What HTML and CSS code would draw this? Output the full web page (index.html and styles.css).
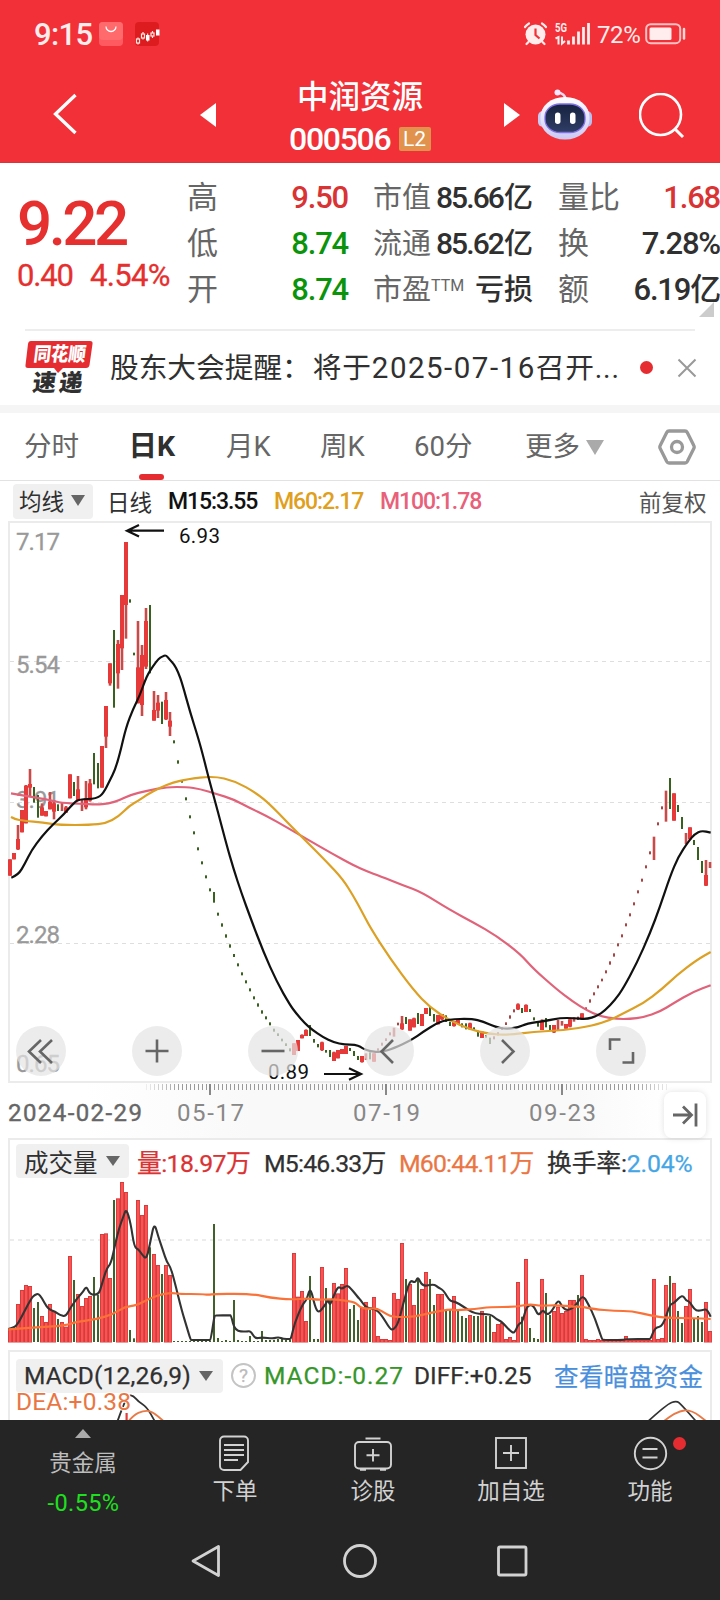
FILE: index.html
```html
<!DOCTYPE html>
<html lang="zh-CN">
<head>
<meta charset="utf-8">
<title>中润资源 000506</title>
<link rel="stylesheet" href="styles.css">
</head>
<body>
<div class="app">
  <header class="top">
    <div class="status">
      <span class="clock">9:15</span>
      <svg class="bag" width="24" height="24" viewBox="0 0 24 24"><rect width="24" height="24" rx="4" fill="#ff5a60"/><rect width="24" height="18" rx="4" fill="#ff6a6c"/><path d="M7 4.500a5 5 0 0 0 10 0" fill="none" stroke="#fff" stroke-width="1.300"/></svg>
      <svg class="kapp" width="25" height="24" viewBox="0 0 25 24"><rect width="24" height="24" rx="4" fill="#dd1c20"/><g fill="none" stroke="#ffe8e0" stroke-width="1.200"><rect x="1.500" y="17" width="3" height="4"/><path d="M3 15.500v1.500M3 21v1.500M8 10v2m0 4v1.500"/><rect x="6.500" y="12" width="3" height="4"/><path d="M17.500 9v2m0 3v2"/><rect x="16" y="11" width="3" height="3"/></g><path d="M11 13h3.500v5.500H11zM21 7.500h3.500v6H21z" fill="#fff"/><path d="M12.700 11.500v8" stroke="#fff"/></svg>
      <span class="grow"></span>
      <svg class="alarm" width="25" height="24" viewBox="0 0 25 24"><circle cx="12.500" cy="12.500" r="10" fill="#ffecec"/><path d="M2 5a13 13 0 0 1 4-3.500M23 5a13 13 0 0 0-4-3.500M5.500 20l-2 2M19.500 20l2 2" stroke="#ffecec" stroke-width="2.200" fill="none" stroke-linecap="round"/><path d="M12.500 6.500v6.500l4 3.500" stroke="#f23038" stroke-width="2.200" fill="none"/></svg>
      <svg class="signal" width="37" height="30" viewBox="-1 -3 37 30"><text x="0" y="10" font-size="12.500" font-weight="700" textLength="12" lengthAdjust="spacingAndGlyphs" fill="#ffecec">5G</text><path d="M.5 16.500l3-1.500v7.500M7 14.500v7l3-2.500" stroke="#ffecec" stroke-width="2" fill="none"/><path d="M13.500 18.500v4M18.500 14.500v8M23.500 9.500v13M28.500 5v17.500M33.500 1v21.500" stroke="#ffecec" stroke-width="2.800"/></svg>
      <span class="pct">72%</span>
      <svg class="battery" width="41" height="22" viewBox="0 0 41 22"><rect x="1.200" y="1.200" width="34" height="19" rx="4.500" fill="none" stroke="#ffc2c4" stroke-width="2"/><rect x="4.500" y="4.500" width="22" height="12.500" rx="1.500" fill="#ffecec"/><path d="M39 6v9.500" stroke="#ffd5d6" stroke-width="2.500" stroke-linecap="round"/></svg>
    </div>
    <div class="titlebar">
      <svg class="back" width="26" height="44" viewBox="0 0 26 44"><path d="M22.500 3L2.500 22l20 19" fill="none" stroke="#fff" stroke-width="3.300"/></svg>
      <svg class="prev" width="16" height="24"><path d="M0 12L16 0V24z" fill="#fff"/></svg>
      <div class="name"><b>中润资源</b><div class="code"><span>000506</span><i>L2</i></div></div>
      <svg class="next" width="16" height="24"><path d="M16 12L0 0V24z" fill="#fff"/></svg>
      <svg class="robot" width="56" height="52" viewBox="0 0 56 52"><defs><linearGradient id="shell" x1="0" y1="0" x2="0" y2="1"><stop offset="0" stop-color="#fff"/><stop offset=".6" stop-color="#e2dffb"/><stop offset="1" stop-color="#c9c8f2"/></linearGradient><linearGradient id="face" x1="0" y1="0" x2="0" y2="1"><stop offset="0" stop-color="#17223f"/><stop offset="1" stop-color="#303d66"/></linearGradient></defs><path d="M29 11Q28 4 20 3.500" fill="none" stroke="#e8dcf5" stroke-width="2.500"/><circle cx="20.500" cy="3.500" r="3" fill="#f3e8ff"/><rect x="1" y="22" width="10" height="16" rx="5" fill="#c9caf4"/><rect x="45" y="22" width="10" height="16" rx="5" fill="#b9bdf0"/><rect x="3.500" y="8" width="49" height="42.500" rx="24" ry="20" fill="url(#shell)"/><rect x="8" y="15" width="40" height="28.500" rx="15" ry="13" fill="url(#face)" stroke="#8171e6" stroke-width="1.300"/><rect x="18" y="23.500" width="5.500" height="11.500" rx="2.700" fill="#fff"/><rect x="33" y="23.500" width="5.500" height="11.500" rx="2.700" fill="#fff"/></svg>
      <svg class="search" width="46" height="46" viewBox="0 0 46 46"><circle cx="21.500" cy="21.500" r="20.500" fill="none" stroke="#fff" stroke-width="2.600"/><path d="M36 36l8 8" stroke="#fff" stroke-width="3"/></svg>
    </div>
  </header>

  <section class="quote">
    <div class="price"><strong>9.22</strong><p><span>0.40</span><span>4.54%</span></p></div>
    <dl class="facts">
      <dt>高</dt><dd class="up">9.50</dd><dt class="mid">市值</dt><dd class="cap">85.66<em>亿</em></dd><dt class="last">量比</dt><dd class="up">1.68</dd>
      <dt>低</dt><dd class="down">8.74</dd><dt class="mid">流通</dt><dd class="cap">85.62<em>亿</em></dd><dt class="last">换</dt><dd>7.28%</dd>
      <dt>开</dt><dd class="down">8.74</dd><dt class="mid">市盈<sup>TTM</sup></dt><dd class="cap"><em>亏损</em></dd><dt class="last">额</dt><dd>6.19亿</dd>
    </dl>
    <svg class="corner" width="15" height="15"><path d="M15 0v15H0z" fill="#ccc"/></svg>
  </section>

  <section class="notice">
    <svg width="68" height="55" viewBox="0 0 68 55"><path d="M6 0h59q3 0 2.500 3l-3 21q-.5 3-3.500 3H38l-5 5-4-5H3q-3 0-2.500-3L3 3q.4-3 3-3z" fill="#e52d31"/><g transform="skewX(-7)" font-weight="900" font-size="19.500"><text x="10.500" y="20.500" fill="#fff" textLength="52" lengthAdjust="spacingAndGlyphs">同花顺</text><text x="13" y="50" fill="#303030" font-size="23.500" textLength="50">速递</text></g></svg>
    <span class="msg">股东大会提醒：<span class="date">将于<span>2025-07-16</span>召开...</span></span>
    <i class="dot"></i>
    <svg width="20" height="20"><path d="M1.500 1.500l17 17M18.500 1.500l-17 17" stroke="#999" stroke-width="2"/></svg>
  </section>

  <nav class="tabs">
    <span>分时</span><span class="on">日K</span><span>月K</span><span>周K</span><span>60分</span>
    <span class="more">更多<svg width="18" height="15"><path d="M0 0h18L9 15z" fill="#aaa"/></svg></span>
    <svg class="gear" width="38" height="36" viewBox="0 0 38 36"><path d="M11 2h16q1.500 0 2.300 1.500l6.500 13q.8 1.500 0 3l-6.500 13Q28.500 34 27 34H11q-1.500 0-2.300-1.500l-6.500-13q-.8-1.500 0-3l6.500-13Q9.500 2 11 2z" fill="none" stroke="#999" stroke-width="3.300"/><circle cx="19" cy="18" r="5.500" fill="none" stroke="#999" stroke-width="3.300"/></svg>
  </nav>

  <div class="legend">
    <span class="pill">均线<svg width="14" height="11"><path d="M0 0h14L7 11z" fill="#666"/></svg></span>
    <span>日线</span><span class="m15">M15:3.55</span><span class="m60">M60:2.17</span><span class="m100">M100:1.78</span><span class="fq">前复权</span>
  </div>

  <section class="panel pricebox">
    <svg id="price" width="700" height="558" viewBox="10 523 700 558"></svg>
    <div class="controls">
      <button><svg viewBox="0 0 50 50"><path d="M25 14L13 25.500 25 37M36 14L24 25.500 36 37"/></svg></button>
      <button><svg viewBox="0 0 50 50"><path d="M13.500 25h23M25 13.500v23"/></svg></button>
      <button><svg viewBox="0 0 50 50"><path d="M13.500 25h23"/></svg></button>
      <button><svg viewBox="0 0 50 50"><path d="M29 14L17.500 25.500 29 37"/></svg></button>
      <button><svg viewBox="0 0 50 50"><path d="M22 14l11.500 11.500L22 37"/></svg></button>
      <button><svg viewBox="0 0 50 50"><path d="M14 24V13.500h10.500M37 26v10.500H26.500"/></svg></button>
    </div>
  </section>
  <div class="axis">
    <svg id="axis" width="720" height="55" viewBox="0 1083 720 55"></svg>
    <button class="jump"><svg width="42" height="46" viewBox="0 0 42 46"><path d="M9 23h18M19 14.500l8.500 8.500-8.500 8.500M32 11.500v23" fill="none" stroke="#666" stroke-width="2.800"/></svg></button>
  </div>

  <section class="panel volbox">
    <div class="volhead"><span class="pill">成交量<svg width="14" height="10"><path d="M0 0h14L7 10z" fill="#666"/></svg></span><span class="v1">量:18.97万</span><span>M5:46.33万</span><span class="v3">M60:44.11万</span><span class="v4">换手率:<em>2.04%</em></span></div>
    <svg id="volume" width="700" height="162" viewBox="10 1181 700 162"></svg>
  </section>

  <section class="panel macdbox">
    <div class="macdhead"><span class="pill">MACD(12,26,9)<svg width="14" height="10"><path d="M0 0h14L7 10z" fill="#666"/></svg></span><i class="help">?</i><span class="green">MACD:-0.27</span><span>DIFF:+0.25</span><a>查看暗盘资金</a></div>
    <svg id="macd" width="700" height="28" viewBox="10 1392 700 28"></svg>
  </section>

  <footer class="bottom">
    <div class="dock">
      <div class="metal"><svg width="16" height="9"><path d="M8 0l8 9H0z" fill="#aaa"/></svg><span>贵金属</span><b>-0.55%</b></div>
      <div class="item"><svg width="40" height="36" viewBox="0 0 40 36"><path d="M9 1.500h20a4 4 0 0 1 4 4V27l-7.500 8H9a4 4 0 0 1-4-4V5.500a4 4 0 0 1 4-4z"/><path d="M9 10h20M9 15h20M9 20h20M9 25h14"/></svg>下单</div>
      <div class="item"><svg width="40" height="36" viewBox="0 0 40 36"><rect x="2" y="7" width="36" height="26.500" rx="4"/><path d="M12.500 3.500h15M20 14v12.500M13.500 20.200h13"/><path d="M7 34.500h6M27 34.500h6" stroke-width="2.500"/></svg>诊股</div>
      <div class="item"><svg width="40" height="36" viewBox="0 0 40 36"><rect x="5" y="3" width="30" height="30"/><path d="M20 10v16M12 18h16"/></svg>加自选</div>
      <div class="item"><svg width="40" height="36" viewBox="0 0 40 36"><circle cx="20.500" cy="18.500" r="15.700"/><path d="M12.500 14h15M12.500 22.500h15" stroke-width="2"/></svg>功能<i class="badge"></i></div>
    </div>
    <div class="sysnav">
      <svg width="34" height="36" viewBox="0 0 34 36"><path d="M28.500 3.500v29L3 18z" stroke-linejoin="round"/></svg>
      <svg width="34" height="36" viewBox="0 0 34 36"><circle cx="17" cy="18" r="15.500"/></svg>
      <svg width="34" height="36" viewBox="0 0 34 36"><rect x="2.500" y="4" width="27.500" height="28" rx="1.500"/></svg>
    </div>
  </footer>
</div>
<script src="chart.js"></script>
</body>
</html>
```

FILE: styles.css
```css
* { box-sizing: border-box; }
body { margin: 0; font-family: Roboto, "Noto Sans CJK SC", sans-serif; color: #303030; background: #fff; }
svg { display: block; flex: none; }
i, em { font-style: normal; }
button { border: 0; padding: 0; margin: 0; }
.app { width: 720px; height: 1600px; overflow: hidden; display: flex; flex-direction: column; }
.app > * { flex: none; }

.top { height: 163px; background: #f23038; color: #fff; border-bottom: 1px solid #d5373d; }
.status { height: 68px; padding: 0 34px; display: flex; align-items: center; color: #ffecec; }
.clock { width: 65px; padding-top: 1px; font-size: 31px; line-height: 68px; font-weight: 500; letter-spacing: -.6px; }
.kapp { margin-left: 12px; }
.grow { flex: 1; }
.signal { margin: 0 6px; }
.pct { width: 48px; font-size: 24px; letter-spacing: -.4px; padding-top: 1px; }
.titlebar { height: 94px; display: flex; align-items: flex-start; padding: 10px 0 0 53px; }
.back { margin-top: 14px; }
.prev { margin: 25px 0 0 121px; }
.name { width: 288px; padding-left: 73px; }
.name b { display: block; height: 36px; margin-left: 8px; padding-top: 1.500px; font-size: 31.500px; line-height: 36px; font-weight: 500; }
.code { display: flex; align-items: center; height: 50px; }
.code span { width: 109.500px; font-size: 32px; font-weight: 500; letter-spacing: -1.300px; }
.code i { width: 32px; height: 24px; background: #e1924d; border-radius: 2px; text-align: center; font-size: 21px; line-height: 25px; }
.next { margin-top: 25px; }
.robot { margin: 11px 0 0 17px; }
.search { margin: 15px 0 0 46px; }

.quote { position: relative; height: 166px; display: flex; }
.price { width: 188px; padding: 24px 0 0 17px; color: #e5302f; }
.price strong { display: block; font-size: 62px; line-height: 74px; font-weight: 500; letter-spacing: -3.600px; }
.price p { margin: -3px 0 0; display: flex; font-size: 31px; line-height: 36px; letter-spacing: -.700px; -webkit-text-stroke: .3px; }
.price p span:first-child { width: 73px; letter-spacing: -1.200px; }
.facts { margin: 0; padding-top: 12px; display: grid; grid-template-columns: 80px 80px 90px 95px 89px 98px; grid-auto-rows: 46px; line-height: 46px; align-items: center; }
.facts dt { font-size: 31px; color: #666; white-space: nowrap; }
.facts dt:not(.mid):not(.last) { margin-left: -1px; }
.facts dt.mid { padding-left: 25px; font-size: 29px; }
.facts dt.last { padding-left: 25px; }
.facts dt sup { font-size: 16px; line-height: 0; vertical-align: 9px; }
.facts dd { margin: 0; text-align: right; font-size: 31px; font-weight: 500; letter-spacing: -1.200px; white-space: nowrap; justify-self: end; }
.facts dd.cap { font-size: 30px; letter-spacing: -1.900px; }
.facts dd.cap em { font-size: 29px; letter-spacing: 0; margin-left: 1px; }
.facts .up { color: #d93334; }
.facts .down { color: #0b940b; }
.corner { position: absolute; right: 6px; bottom: 12px; }

.notice { height: 76px; margin: 0 25px; border-top: 2px solid #ededed; display: flex; align-items: center; }
.msg { flex: none; width: 547px; padding-left: 17px; font-size: 28.700px; line-height: 40px; white-space: nowrap; }
.date { margin-left: 2px; letter-spacing: .8px; }
.date span { font-size: 29.500px; letter-spacing: 1.500px; }
.dot { flex: none; width: 13px; height: 13px; margin: -2px 24px 0 0; border-radius: 50%; background: #e52d31; }

.tabs { height: 76px; border-top: 8px solid #f5f5f5; border-bottom: 1px solid #e2e2e2; display: grid; grid-template-columns: 106px 96px 94px 94px 111px 133px 40px; padding-left: 24px; align-items: center; font-size: 27.500px; color: #666; }
.tabs span { line-height: 66px; padding-top: 1px; }
.tabs .on { position: relative; left: -1.500px; color: #303030; font-weight: 700; font-size: 28.500px; }
.tabs .on::after { content: ""; position: absolute; left: 10.500px; bottom: 0; width: 25px; height: 6px; border-radius: 3px; background: #e52d31; }
.more { display: flex; align-items: center; gap: 6px; }

.legend { height: 40px; padding-left: 13px; display: grid; grid-template-columns: 94px 61px 106px 106px 259px 80px; align-items: center; font-size: 22.500px; }
.pill { display: flex; align-items: center; justify-content: space-between; background: #f0f0f0; border-radius: 4px; }
.legend .pill { width: 80px; height: 35px; padding: 0 8px 2px 6px; }
.legend > span:not(.pill) { margin-top: -1px; }
.m15, .m60, .m100 { font-size: 23px; font-weight: 500; letter-spacing: -1.100px; padding-top: 2px; }
.m15 { color: #111; }
.m60 { color: #dfa01e; }
.m100 { color: #e8607a; }
.fq { color: #555; }

.panel { margin: 0 8px; border: 2px solid #ebebeb; }
.panel > svg { overflow: visible; }
.pricebox { position: relative; height: 562px; }
.controls { position: absolute; left: 6px; top: 503px; display: flex; gap: 66px; }
.controls button { width: 50px; height: 50px; border-radius: 50%; background: rgba(228,228,228,.7); }
.controls path { fill: none; stroke: #666; stroke-width: 2.600; }
.axis { position: relative; height: 55px; background: linear-gradient(90deg, #fff 12%, #f9f9f9 35%, #f9f9f9 80%, #fff 93%); }
.jump { position: absolute; left: 664px; top: 9px; width: 42px; height: 46px; border-radius: 8px; background: #fff; box-shadow: 0 0 6px rgba(0,0,0,.12); }

.volbox { height: 204px; border-bottom: 0; }
.volhead, .macdhead { display: grid; align-items: center; font-size: 24.500px; white-space: nowrap; }
.volhead { height: 41px; padding: 1px 0 0 6px; grid-template-columns: 121px 127px 135px 148px 150px; }
.volhead > span:not(.pill) { letter-spacing: -.800px; font-size: 24.800px; -webkit-text-stroke: .25px; }
.volhead > .v1:not(.pill) { letter-spacing: -.600px; }
.volhead > .v4:not(.pill) { letter-spacing: -.150px; }
.volhead .pill { width: 113px; height: 34px; padding: 0 9px 0 8px; }
.v1 { color: #d93334; }
.v3 { color: #ea7644; }
.v4 em { color: #45a6e6; }
.macdbox { margin-top: 8px; height: 70px; border-bottom: 0; }
.macdhead { height: 40px; padding: 6px 0 0 6px; grid-template-columns: 215px 33px 150px 140px 150px; }
.macdhead > * { -webkit-text-stroke: .25px; }
.macdhead .pill { width: 207px; height: 34px; padding: 0 10px 0 8px; letter-spacing: .15px; }
.help { width: 25px; height: 25px; border: 2px solid #c4c4c4; border-radius: 50%; color: #bbb; font-size: 19px; line-height: 21px; text-align: center; }
.green { color: #36962a; letter-spacing: 1px; }
.macdhead a { color: #4a8fdc; letter-spacing: .4px; }

.bottom { height: 180px; background: #252525; color: #d2d2d2; }
.dock { height: 106px; padding-left: 15px; display: grid; grid-template-columns: 136px 168px 108px 168px 110px; font-size: 22.500px; }
.metal { display: flex; flex-direction: column; align-items: center; padding-top: 9px; color: #bdbdbd; }
.metal span { line-height: 32px; margin-top: 9px; }
.metal b { margin: 10px 0 0 1px; font-weight: 400; font-size: 23.500px; line-height: 28px; color: #1fe01f; letter-spacing: .400px; }
.item { position: relative; display: flex; flex-direction: column; align-items: center; padding-top: 15px; line-height: 40px; }
.item svg, .sysnav svg { fill: none; stroke: #d2d2d2; stroke-width: 1.900; }
.badge { position: absolute; left: 78px; top: 17px; width: 13px; height: 13px; border-radius: 50%; background: #e52d31; }
.sysnav { display: flex; padding: 17px 0 0 190px; gap: 119px; }
.sysnav svg { stroke-width: 2.800; }
```

FILE: chart.js
```js
const NS = 'http://www.w3.org/2000/svg';
const RED = '#e63a3a', WICK = '#c94a4a', GREEN = '#38601f';

function add(parent, tag, attrs, text) {
  const el = document.createElementNS(NS, tag);
  for (const k in attrs) el.setAttribute(k, attrs[k]);
  if (text) el.textContent = text;
  parent.appendChild(el);
  return el;
}
// Text stretched to a given width by spacing only
function label(parent, x, y, width, text, size, fill, extra) {
  add(parent, 'text', Object.assign({ x, y, textLength: width, 'font-size': size, fill }, extra), text);
}
// Each part is [originX, originY, "x,y x,y ..."] in thirds of a pixel
function line(parent, parts, stroke, width) {
  const pts = parts.flatMap(([ox, oy, s]) => s.split(' ').map(p => {
    const [x, y] = p.split(',').map(Number);
    return [ox + x / 3, oy + y / 3];
  }));
  let d = 'M' + pts[0].join(' ');
  for (let i = 1; i < pts.length - 1; i++) {
    const [x, y] = pts[i], [nx, ny] = pts[i + 1];
    d += `Q${x} ${y} ${(x + nx) / 2} ${(y + ny) / 2}`;
  }
  d += 'L' + pts[pts.length - 1].join(' ');
  add(parent, 'path', { d, fill: 'none', stroke, 'stroke-width': width, 'stroke-linejoin': 'round' });
}
const xOf = i => 10 + 4 * i;

// Candles: colour, top, bottom [, bodyTop, bodyBottom]; "d" is a one-price red day
const candleParts = [
  [520, 'r 1018 1067 1018 1067|r 999 1018 999 1018|r 915 990 957 988|r 870 937 870 937|r 795 910 797 910|r 747 828 792 803|g 801 848|g 825 893|r 850 887 862 887|r 873 889 873 889|r 816 868 845 868|r 840 898 850 875|g 853 873|r 848 873|r 858 878 862 878|r 763 835 763 835|g 786 828|r 768 842 808 840|r 840 873|r 783 868 835 862|r 777 845 790 842|g 699 793|g 729 805|r 678 803 678 803|r 558 684 558 650|r 430 497 430 490|g 330 563|r 360 506 372 460|r 225 450 225 385|r 66 356 66 255|g 238 248|g 398 406|r 303 550 442 550|r 375 588 405 555|r 264 447 303 440|g 255 460|r 513 602 570 602|r 525 594 548 572|g 545 612|r 516 600 540 598|r 576 648 602 620|g 661 670|g 721 731|g 780 788|g 832 841|g 886 895|g 934 943|g 982 991|g 1024 1033|g 1066 1075|g 1105 1114|g 1116 1148|g 1178 1187'],
  [880, 'g 130 140|g 163 173|g 193 203|g 222 231|g 250 259|g 277 286|g 301 310|g 325 334|g 349 358|g 370 380|g 391 401|g 409 418|g 427 436|g 446 455|g 460 468|g 476 484|g 490 498|g 505 514|r 490 525 490 525|r 480 513 480 513|r 463 475 465 475|r 448 468 450 468|g 435 468|g 477 488|g 492 502|r 485 513 487 510|g 510 518|g 510 531|r 515 543 517 543|r 510 535 510 535|r 507 522 507 522|r 498 522 498 522|g 504 513|g 513 528|g 528 540|r 528 548 528 546|r 520 540|g 517 538|r 520 545 520 545'],
  [740, 'd 925 932|d 908 917|d 895 903|d 877 886|r 863 890|d 848 856|r 828 870 850 868|g 831 852|r 838 872 838 872|r 833 862 835 862|g 819 852|r 822 858 822 858|r 804 822 804 822|g 801 828|g 822 845|r 825 853 825 853|r 822 840 822 838|g 826 846|g 845 858|r 843 860 843 858|r 840 852 840 852|g 850 862|g 850 868|r 848 868 850 868|g 862 872|g 872 890|r 875 894 875 894|g 885 893|g 893 912|d 889 898|d 877 886|d 862 870|d 847 855|d 826 836|d 808 817|r 790 810 793 808|g 804 819|r 793 816 795 816|g 807 816|g 832 841|g 849 860|r 838 870 843 870|g 834 862|g 855 870|r 855 879 855 877|r 840 870|r 843 857|r 852 866 852 866|r 838 862 838 860|r 832 845|d 830 840|r 820 838 820 838|d 802 810|d 778 788|d 757 766|d 736 745|d 716 724|d 691 700|d 664 674|d 640 650|d 610 619|d 583 592|d 550 559|d 520 529|d 487 496|d 451 460|d 416 425|d 376 385|d 334 343|r 290 360|d 247 256|d 199 208|r 152 245|g 114 207|r 160 242 160 242|g 195 216|g 231 267|r 279 312|r 262 298 262 298|g 300 315|g 321 360|g 363 399|r 360 438 405 437|r 366 384']
];

const price = document.getElementById('price');
[661.5, 802.5, 943.5].forEach(y => add(price, 'line', { x1: 10, x2: 710, y1: y, y2: y, stroke: '#dedede', 'stroke-dasharray': '4 4' }));
[['7.17', 550], ['5.54', 673], ['3.91', 808], ['2.28', 943], ['0.65', 1072]].forEach(([t, y]) => label(price, 16, y, 44, t, 24, '#999', { stroke: '#999', 'stroke-width': .3 }));

const colours = [];
candleParts.forEach(([oy, s]) => s.split('|').forEach(row => {
  const [c, ...n] = row.split(' ');
  const [t, b, bt, bb] = n.map(v => oy + v / 3);
  const x = xOf(colours.length);
  const w = c === 'r' ? 2.6 : 2;
  add(price, 'rect', { x: x - w / 2, y: t, width: w, height: b - t, fill: c === 'g' ? GREEN : c === 'd' ? '#a84444' : WICK });
  if (bt) add(price, 'rect', { x: x - 2, y: bt, width: 4, height: bb - bt, fill: RED });
  colours.push(c);
}));

line(price, [
  [0, 520, '33,820 90,830 150,840 185,849 240,851 290,854 325,851 360,840 390,825 440,812 500,801 560,801 600,807 650,822 700,838 750,864 800,888 860,922 925,960 1000,1003 1060,1036'],
  [360, 740, '20,394 60,408 130,436 185,457 270,510 340,547 410,588 480,641 520,686 590,748 640,786 680,811 720,829 770,837 810,837 850,832 900,815 940,790 1000,755 1052,736']
], '#e0637a', 2.2);
line(price, [
  [0, 520, '33,891 45,898 70,902 130,908 180,915 270,915 318,910 355,890 388,857 415,842 440,825 480,803 520,787 560,778 640,768 705,783 770,820 810,853 860,905 920,965 980,1025 1030,1080 1060,1128'],
  [360, 740, '4,511 30,562 90,655 160,750 210,802 270,842 330,868 385,882 445,885 520,875 610,871 700,857 750,840 790,820 850,790 905,748 950,706 1010,660 1052,636']
], '#dca024', 2.2);
line(price, [
  [0, 520, '34,1073 55,1065 75,1030 95,990 125,950 160,912 190,885 222,848 237,838 290,836 310,820 330,780 345,750 360,700 378,622 400,565 420,525 440,468 460,437 475,417 487,409 498,405 508,418 522,432 535,457 547,492 570,575 595,655 610,710 625,770 655,880 680,975 700,1045'],
  [0, 880, '725,41 752,115 790,215 830,305 870,375 890,402 915,430 935,448 970,472 1000,487 1035,494 1065,494 1082,501'],
  [360, 740, '10,926 30,934 65,937 100,925 155,900 190,875 230,850 265,838 335,836 370,845 405,861 440,867 475,862 500,851 560,842 600,834 640,834 680,838 710,828 735,812 765,780 790,745 830,670 870,580 900,500 930,410 955,350 985,305 1005,281 1025,272 1052,278']
], '#111', 2.2);
label(price, 179, 543, 41, '6.93', 20.5, '#111');
label(price, 268, 1079, 41, '0.89', 20.5, '#111');
add(price, 'path', { d: 'M164 530.7H127M139 525l-12 5.700 12 5.700M324 1074H361M349 1068.300l12 5.700-12 5.700', fill: 'none', stroke: '#111', 'stroke-width': 2.2 });

const axis = document.getElementById('axis');
for (let x = 146; x <= 666; x += 4) {
  const fade = Math.min(1, (x - 140) / 40, (674 - x) / 40);
  add(axis, 'line', { x1: x + .5, x2: x + .5, y1: 1084, y2: 1090, stroke: '#999', opacity: fade });
}
[210, 386, 562].forEach(x => add(axis, 'line', { x1: x, x2: x, y1: 1084, y2: 1095, stroke: '#888', 'stroke-width': 2 }));
label(axis, 8, 1121, 134, '2024-02-29', 24, '#666', { stroke: '#666', 'stroke-width': .4 });
label(axis, 177, 1121, 67, '05-17', 24, '#888');
label(axis, 353, 1121, 67, '07-19', 24, '#888');
label(axis, 529, 1121, 67, '09-23', 24, '#888');

// Volume bar tops, in thirds of a pixel below y = 1130
const volume = document.getElementById('volume');
const tops = ('597 597 522 480 465 468 534 516 558 576 522 543 567 576 590 378 450 492 528 504 498 441 495 312 310 444 210 205 156 186 600 625 210 255 225 352 372 405 432 405 435 '
  + '633 633 633 633 633 633 633 633 633 633 282 624 633 630 633 510 630 633 633 618 633 633 603 630 630 630 627 627 630 630 369 500 483 573 438 627 627 411 474 510 459 490 462 414 537 525 570 '
  + '534 516 540 501 618 627 627 630 489 507 339 447 462 525 447 477 426 447 525 492 492 537 537 498 540 558 564 555 558 558 543 558 558 606 582 579 627 621 630 456 560 387 594 624 627 447 489 555 543 530 549 543 510 510 495 435 '
  + '627 630 630 627 630 630 630 630 630 630 618 630 630 630 630 630 630 447 627 624 465 438 459 543 579 528 477 567 558 576 516 603').split(' ').map(Number);
add(volume, 'line', { x1: 10, x2: 710, y1: 1240, y2: 1240, stroke: '#e6e6e6', 'stroke-width': 1.5, 'stroke-dasharray': '4 4' });
const greenVolume = new Set([112, 142]);
tops.forEach((t, i) => {
  const y = 1130 + t / 3, h = 1342 - y;
  if (colours[i] === 'g' || greenVolume.has(i)) {
    add(volume, 'rect', { x: xOf(i) - 1, y, width: 2, height: h, fill: '#41602a' });
  } else {
    add(volume, 'rect', { x: xOf(i) - 2, y, width: 4, height: h + .5, fill: '#d63c3c' });
    add(volume, 'rect', { x: xOf(i) - 1, y: y + 1, width: 2.3, height: Math.max(0, h - 1), fill: '#fa5353' });
  }
});
line(volume, [
  [0, 1130, '25,597 42,593 55,580 70,550 95,503 105,494 115,491 125,503 140,530 150,540 165,545 180,555 197,560 210,535 235,500 250,485 259,468 270,494 296,494 305,465 320,415 333,400 345,345 357,295 370,260 379,235 392,280 403,352 415,357 427,375 440,388 452,330 463,278 475,320 490,365 500,395 512,412 525,460 545,540 560,590 572,630 574,630 630,630 632,630 643,560 645,556 691,556 693,556 705,603 740,605 752,603 765,626 785,622 820,626 835,621 850,627 870,627 873,626 884,578 908,522 920,510 931,470 945,530 956,550 975,525 985,508 990,528 1002,495 1015,468 1025,478 1040,466 1050,472 1075,503'],
  [360, 1130, '0,508 20,535 45,535 65,555 90,597 100,600 115,580 130,520 150,448 165,460 174,439 187,470 222,462 235,473 250,480 270,514 285,514 310,530 345,552 392,552 410,568 425,575 450,602 463,611 475,582 487,578 500,527 520,524 535,559 548,538 560,555 575,545 595,508 605,528 620,543 645,530 668,494 685,522 705,565 726,628 730,630 790,630 800,627 868,627 872,627 885,592 908,590 930,522 942,520 967,493 978,512 988,514 1003,538 1015,543 1035,538 1042,540 1052,560']
], '#333', 2.1);
line(volume, [
  [0, 1130, '25,598 90,594 200,586 225,576 290,568 340,552 375,530 408,527 450,505 490,491 520,489 540,492 605,492 625,495 645,491 760,492 810,503 870,509 930,505 950,510 1000,507 1060,515 1075,525'],
  [360, 1130, '0,532 20,537 50,534 80,553 100,561 165,561 215,547 270,538 290,541 345,537 390,531 465,531 510,522 540,528 590,525 640,530 665,530 700,537 765,543 815,543 875,557 920,564 1000,564 1052,567']
], '#fa7238', 2.2);

const macd = document.getElementById('macd');
add(macd, 'rect', { x: 125.5, y: 1413, width: 2.2, height: 7, fill: RED });
line(macd, [[0, 1130, '352,875 370,825 385,795 400,797 415,815 440,830 465,875']], '#333', 1.8);
line(macd, [[0, 1130, '380,880 400,855 430,842 455,843 494,876']], '#e87a48', 1.8);
line(macd, [[360, 1130, '862,876 920,823 950,812 965,825 1010,876']], '#333', 1.8);
line(macd, [[360, 1130, '908,876 950,843 995,840 1042,876']], '#e87a48', 1.8);
add(macd, 'text', { x: 16, y: 1410, textLength: 115, 'font-size': 24.5, fill: '#ea7644', stroke: '#fff', 'stroke-width': 2, 'paint-order': 'stroke' }, 'DEA:+0.38');
```
